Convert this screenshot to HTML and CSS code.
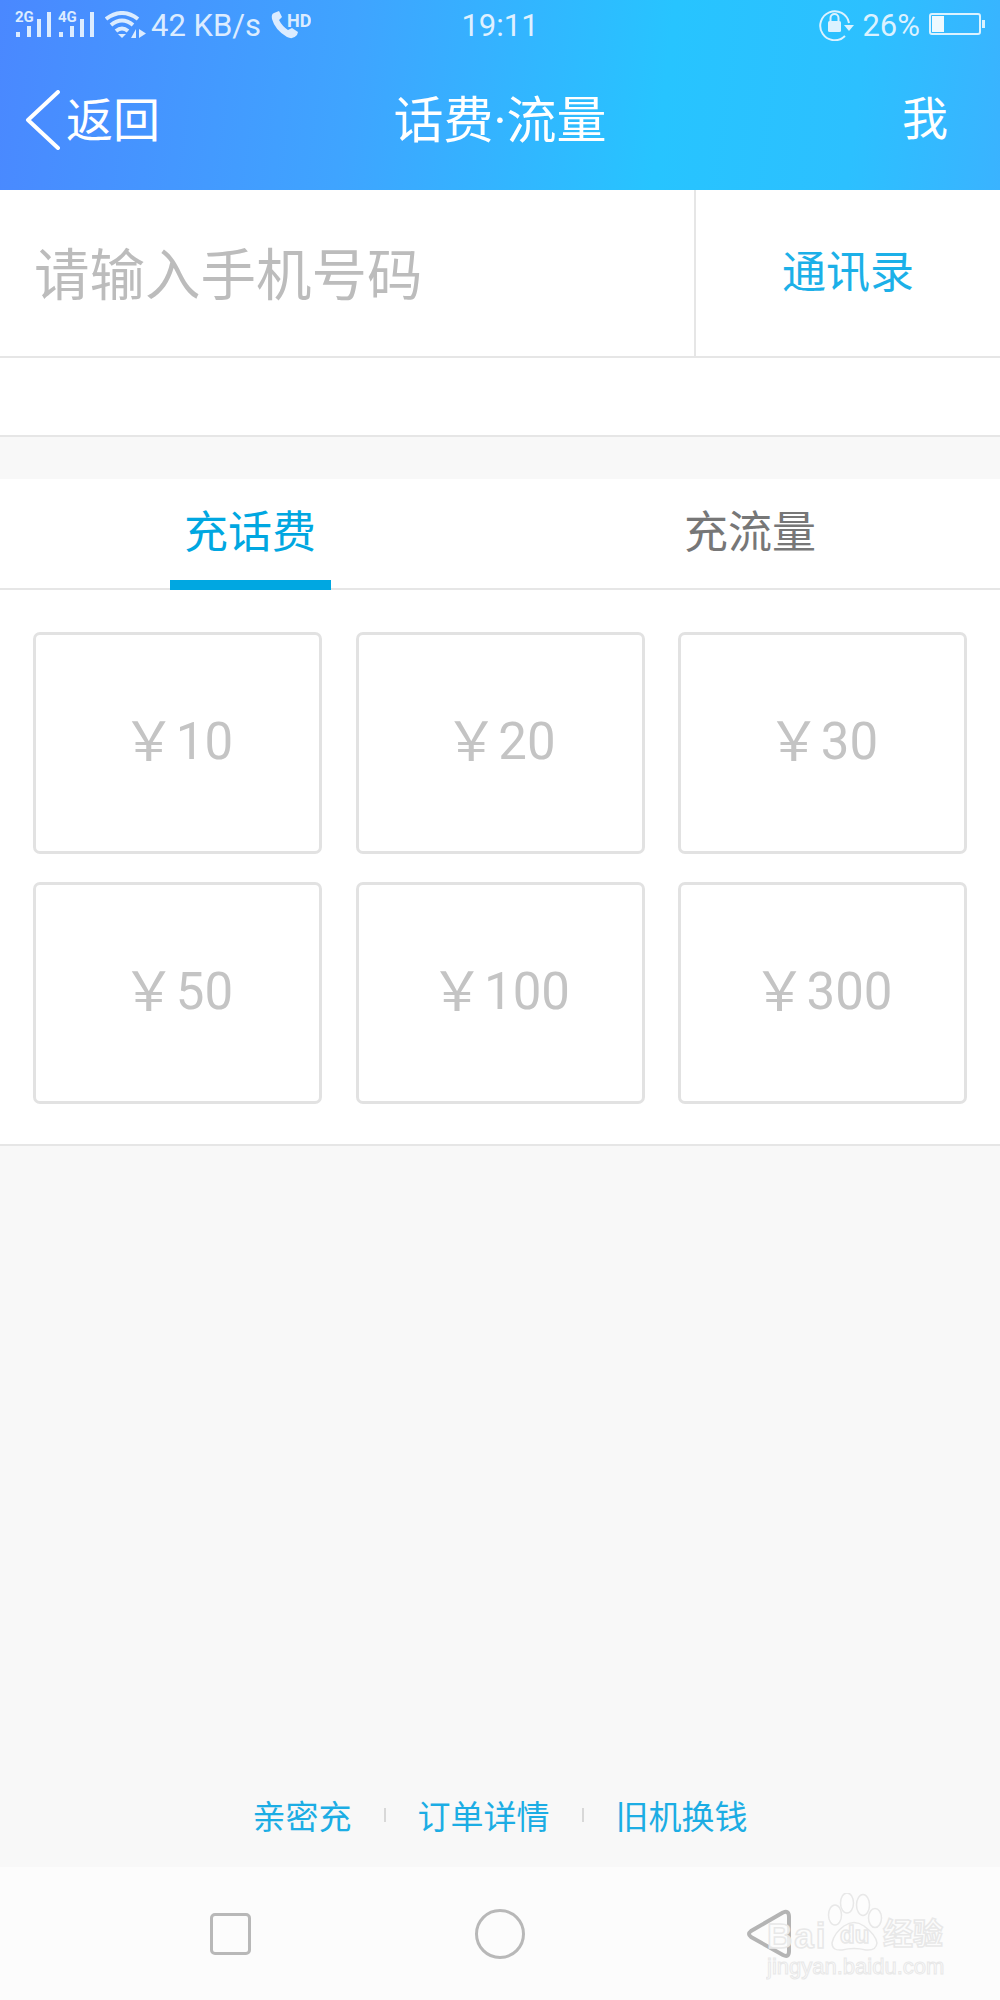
FILE: index.html
```html
<!DOCTYPE html>
<html lang="zh-CN">

<head>
    <meta charset="UTF-8">
    <meta name="viewport" content="width=device-width, initial-scale=1.0">
    <title>话费·流量</title>
    <link rel="stylesheet" href="styles.css">
</head>

<body>
    <div class="page">
        <header class="top">
            <div class="status">
                <div class="status-left">
                    <svg class="sig" width="37" height="34" viewBox="0 -4 37 34">
                        <text x="0" y="11" class="sig-label">2G</text>
                        <rect x="1" y="21" width="4" height="5" />
                        <rect x="12" y="15" width="4" height="11" />
                        <rect x="22" y="8" width="4" height="18" />
                        <rect x="32" y="1" width="4" height="25" />
                    </svg>
                    <svg class="sig sig-two" width="37" height="34" viewBox="0 -4 37 34">
                        <text x="0" y="11" class="sig-label">4G</text>
                        <rect x="1" y="21" width="4" height="5" />
                        <rect x="12" y="15" width="4" height="11" />
                        <rect x="22" y="8" width="4" height="18" />
                        <rect x="32" y="1" width="4" height="25" />
                    </svg>
                    <svg class="wifi" width="42" height="30" viewBox="0 0 42 30">
                        <path d="M1 8 Q17 -4 33 8 M6 14 Q17 5 28 14 M11 20 Q17 15 23 20" fill="none" stroke="#dcecff" stroke-width="4" />
                        <path d="M13 23 L21 23 L17 27 Z" fill="#dcecff" />
                        <path d="M31 18 V27 H26 Z M34 18 V27 L41 22.5 Z" fill="#dcecff" />
                    </svg>
                    <span class="speed">42 KB/s</span>
                    <svg class="call" width="40" height="30" viewBox="0 0 40 30">
                        <path d="M3 3 Q0 4 1 9 Q4 20 16 27 Q22 30 26 25 L27 22 L21 18 L17 20 Q11 16 8 10 L11 7 L8 1 Z" fill="#dcecff" />
                        <text x="16" y="17" class="call-label">HD</text>
                    </svg>
                </div>
                <div class="clock">19:11</div>
                <div class="status-right">
                    <svg class="rotlock" width="40" height="32" viewBox="0 0 40 32">
                        <path d="M28 27 A14.5 14.5 0 1 1 32 14" fill="none" stroke="#dcf2ff" stroke-width="2" />
                        <path d="M27 16 H37 L32 22 Z" fill="#dcf2ff" />
                        <rect x="11" y="12" width="13" height="11" rx="1.5" fill="#dcf2ff" />
                        <path d="M13.5 12 V9 A4 4 0 0 1 21.5 9 V12" fill="none" stroke="#dcf2ff" stroke-width="2" />
                    </svg>
                    <span class="pct">26%</span>
                    <div class="battery">
                        <div class="battery-body"><div class="battery-fill"></div></div>
                        <div class="battery-nub"></div>
                    </div>
                </div>
            </div>
            <nav class="titlebar">
                <a class="back">
                    <svg width="36" height="60" viewBox="0 0 36 60">
                        <path d="M33 2 L3 30 L33 58" fill="none" stroke="#fff" stroke-width="4" stroke-linecap="round" stroke-linejoin="round" />
                    </svg>
                    <span>返回</span>
                </a>
                <div class="title">话费<span class="title-dot">·</span>流量</div>
                <a class="me">我</a>
            </nav>
        </header>

        <section class="phone">
            <div class="phone-row">
                <div class="phone-input">请输入手机号码</div>
                <div class="contacts">通讯录</div>
            </div>
            <div class="phone-note"></div>
        </section>

        <section class="recharge">
            <div class="tabs">
                <div class="tab tab-on"><span>充话费</span></div>
                <div class="tab"><span>充流量</span></div>
            </div>
            <div class="amounts">
                <div class="amount"><i>￥</i>10</div>
                <div class="amount"><i>￥</i>20</div>
                <div class="amount"><i>￥</i>30</div>
                <div class="amount"><i>￥</i>50</div>
                <div class="amount"><i>￥</i>100</div>
                <div class="amount"><i>￥</i>300</div>
            </div>
        </section>

        <main class="rest">
            <div class="links">
                <a>亲密充</a>
                <b class="sep"></b>
                <a>订单详情</a>
                <b class="sep"></b>
                <a>旧机换钱</a>
            </div>
        </main>

        <footer class="softkeys">
            <div class="key"><div class="key-square"></div></div>
            <div class="key"><div class="key-circle"></div></div>
            <div class="key">
                <svg width="46" height="50" viewBox="0 0 46 50">
                    <path d="M4 22 L36 3.5 Q42 1 42 8 V42 Q42 49 36 46 L4 28 Q0 25 4 22 Z" fill="none" stroke="#b4b4b4" stroke-width="4" stroke-linejoin="round" />
                </svg>
            </div>

            <!-- site stamp over the bottom right corner -->
            <svg class="stamp" width="190" height="96" viewBox="0 0 190 96">
                <g class="stamp-paw">
                    <ellipse cx="69" cy="22" rx="6.5" ry="10" />
                    <ellipse cx="81" cy="10" rx="6.5" ry="10" />
                    <ellipse cx="97" cy="12" rx="6.5" ry="10.5" />
                    <ellipse cx="109" cy="25" rx="6.5" ry="9.5" />
                    <path d="M66 50 Q68 40 78 33 Q88 26 98 33 Q110 42 111 50 Q110 58 100 57 Q88 54 76 57 Q66 58 66 50 Z" />
                </g>
                <text x="1" y="55" class="stamp-word">Bai</text>
                <text x="74" y="50" class="stamp-du">du</text>
                <text x="117" y="51" class="stamp-cn">经验</text>
                <text x="1" y="81" class="stamp-url">jingyan.baidu.com</text>
            </svg>
        </footer>
    </div>
</body>

</html>
```

FILE: styles.css
```css
* {
    box-sizing: border-box;
    margin: 0;
    padding: 0;
}

body {
    font-family: "Noto Sans CJK SC", "Roboto", sans-serif;
    background: #f8f8f8;
}

.page {
    display: flex;
    flex-direction: column;
    width: 1000px;
    height: 2000px;
    overflow: hidden;
}

/* top bar */
.top {
    height: 190px;
    color: #fff;
    background: linear-gradient(97deg, #4a88ff 0%, #3fa4ff 35%, #27c4ff 66%, #2cc0ff 85%, #3ab3ff 100%);
}

.status {
    display: grid;
    grid-template-columns: 1fr auto 1fr;
    align-items: center;
    height: 50px;
    padding: 0 15px;
    font-family: "Roboto", sans-serif;
    font-size: 31px;
}

.status-left {
    display: flex;
    align-items: center;
}

.sig {
    margin-top: -2px;
    fill: #dcecff;
}

.sig-two {
    margin-left: 6px;
}

.sig-label {
    font-size: 15px;
    font-weight: 700;
    font-family: "Roboto", sans-serif;
}

.wifi {
    margin-left: 10px;
    margin-top: 1px;
}

.speed {
    margin-left: 4px;
    color: #dcecff;
    white-space: nowrap;
}

.call {
    margin-left: 10px;
}

.call-label {
    font-size: 18px;
    font-weight: 700;
    font-family: "Roboto", sans-serif;
    fill: #dcecff;
}

.clock {
    color: #dff0ff;
}

.status-right {
    display: flex;
    align-items: center;
    justify-content: flex-end;
}

.pct {
    margin-left: 5px;
    color: #dcf2ff;
}

.battery {
    display: flex;
    align-items: center;
    margin-left: 9px;
    margin-top: -2px;
}

.battery-body {
    width: 52px;
    height: 22px;
    padding: 1px;
    border: 2px solid #dcf2ff;
    border-radius: 3px;
}

.battery-fill {
    width: 12px;
    height: 100%;
    background: #eef9ff;
}

.battery-nub {
    width: 3px;
    height: 8px;
    margin-left: 1px;
    background: #dcf2ff;
}

.titlebar {
    display: grid;
    grid-template-columns: 1fr auto 1fr;
    align-items: center;
    height: 140px;
    padding: 0 25px 8px;
    font-size: 47px;
}

.back {
    display: flex;
    align-items: center;
}

.back svg {
    margin-top: 8px;
}

.back span {
    margin-left: 5px;
}

.title {
    font-size: 50px;
}

.title-dot {
    font-family: "Roboto", sans-serif;
}

.me {
    justify-self: end;
    font-size: 46px;
    margin-top: -2px;
    margin-right: 27px;
}

/* phone number */
.phone {
    background: #fff;
}

.phone-row {
    display: flex;
    height: 168px;
    border-bottom: 2px solid #e6e6e6;
}

.phone-input {
    display: flex;
    align-items: center;
    width: 696px;
    padding-left: 34px;
    padding-bottom: 5px;
    font-size: 55.5px;
    color: #bcbcbc;
    border-right: 2px solid #e6e6e6;
}

.contacts {
    flex: 1;
    display: flex;
    align-items: center;
    justify-content: center;
    padding-bottom: 9px;
    font-size: 44px;
    color: #1cb0e8;
}

.phone-note {
    height: 79px;
    border-bottom: 2px solid #e6e6e6;
}

/* recharge panel */
.recharge {
    margin-top: 42px;
    background: #fff;
    border-bottom: 2px solid #e6e6e6;
}

.tabs {
    display: flex;
    height: 111px;
    border-bottom: 2px solid #e6e6e6;
}

.tab {
    display: flex;
    justify-content: center;
    width: 500px;
    font-size: 44px;
    color: #777;
}

.tab span {
    height: 111px;
    width: 161px;
    padding-top: 17px;
    line-height: 66px;
    text-align: center;
}

.tab-on {
    color: #00a7e1;
}

.tab-on span {
    border-bottom: 10px solid #00a7e1;
}

.amounts {
    display: grid;
    grid-template-columns: repeat(3, 289px);
    grid-auto-rows: 222px;
    justify-content: space-between;
    row-gap: 28px;
    padding: 42px 33px 40px;
}

.amount {
    display: flex;
    align-items: center;
    justify-content: center;
    padding-bottom: 4px;
    font-family: "Roboto", sans-serif;
    font-size: 51px;
    color: #c4c4c4;
    border: 3px solid #e2e2e2;
    border-radius: 7px;
}

.amount i {
    font-family: "Noto Sans CJK SC", sans-serif;
    font-style: normal;
    font-size: 54px;
    line-height: 1;
    margin-bottom: 6px;
}

/* lower part */
.rest {
    flex: 1;
    display: flex;
    flex-direction: column;
    justify-content: flex-end;
}

.links {
    display: flex;
    align-items: center;
    justify-content: center;
    gap: 32px;
    height: 100px;
    margin-bottom: 2px;
    font-size: 33px;
    color: #1cade4;
}

.sep {
    width: 2px;
    height: 14px;
    background: #d8d8d8;
}

.softkeys {
    position: relative;
    display: grid;
    grid-template-columns: repeat(3, 270px);
    justify-content: center;
    align-items: center;
    height: 133px;
    background: #fcfcfc;
}

.key {
    display: flex;
    justify-content: center;
    align-items: center;
}

.key-square {
    width: 41px;
    height: 42px;
    border: 3px solid #b8b8b8;
    border-radius: 5px;
}

.key-circle {
    width: 50px;
    height: 50px;
    border: 3px solid #b8b8b8;
    border-radius: 50%;
}

.stamp {
    position: absolute;
    left: 766px;
    top: 26px;
}

.stamp text,
.stamp-paw {
    fill: #fdfdfd;
    fill-opacity: 0.8;
    stroke: #e8e8e8;
    stroke-width: 1.5;
}

.stamp text {
    font-family: "Liberation Sans", sans-serif;
}

.stamp-word {
    font-size: 35px;
    font-weight: 700;
    letter-spacing: 2px;
}

.stamp-du {
    font-size: 24px;
    font-weight: 700;
}

.stamp .stamp-cn {
    font-family: "Noto Sans CJK SC", sans-serif;
    font-size: 30px;
    font-weight: 700;
}

.stamp .stamp-url {
    font-size: 22px;
    stroke-width: 1;
}
```
